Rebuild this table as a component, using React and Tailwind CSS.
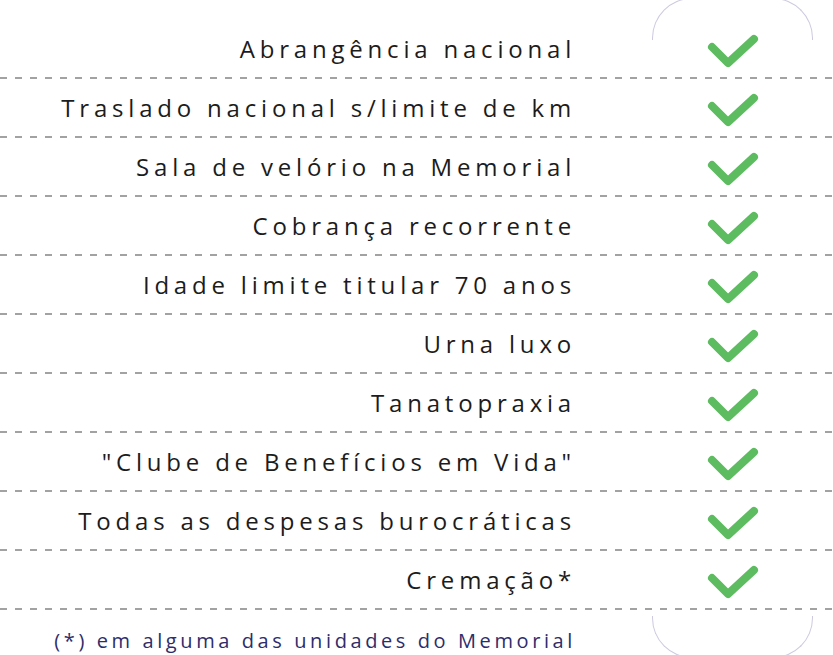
const items = [
  'Abrangência nacional',
  'Traslado nacional s/limite de km',
  'Sala de velório na Memorial',
  'Cobrança recorrente',
  'Idade limite titular 70 anos',
  'Urna luxo',
  'Tanatopraxia',
  '"Clube de Benefícios em Vida"',
  'Todas as despesas burocráticas',
  'Cremação*',
]

function Check() {
  return (
    <svg width="60" height="40" viewBox="0 0 60 40" fill="none">
      <path d="M6 15 L22 31 L48 7" stroke="#5dbb60" strokeWidth="8" strokeLinecap="round" strokeLinejoin="round" />
    </svg>
  )
}

export default function App() {
  return (
    <div className="relative w-[833px] h-[655px] overflow-hidden bg-white font-['Open_Sans',sans-serif]">
      {/* column outline caps */}
      <div className="absolute left-[652px] top-[-2px] w-[161px] h-[42px] border border-b-0 border-[#cdc9df] rounded-t-[40px]" />
      <div className="absolute left-[652px] top-[616px] w-[161px] h-[42px] border border-t-0 border-[#cdc9df] rounded-b-[40px]" />

      <div className="pt-[20px]">
        {items.map((label) => (
          <div key={label} className="flex h-[59px] flex-col">
            <div className="flex flex-1 items-center">
              <div className="w-[576px] mr-[-6px] text-right text-[24px] tracking-[0.2em] text-[#1c1c1c]">
                {label}
              </div>
              <div className="flex w-[160px] ml-[86px] justify-center pt-[6px]">
                <Check />
              </div>
            </div>
            <div className="h-[2px] w-full bg-[linear-gradient(to_right,#a2a2a2_7px,transparent_7px)] bg-[length:15px_2px]" />
          </div>
        ))}
      </div>

      <div className="w-[576px] mr-[-4px] pt-[16px] text-right text-[20px] tracking-[0.18em] text-[#2e2d6b]">
        (*) em alguma das unidades do Memorial
      </div>
    </div>
  )
}
